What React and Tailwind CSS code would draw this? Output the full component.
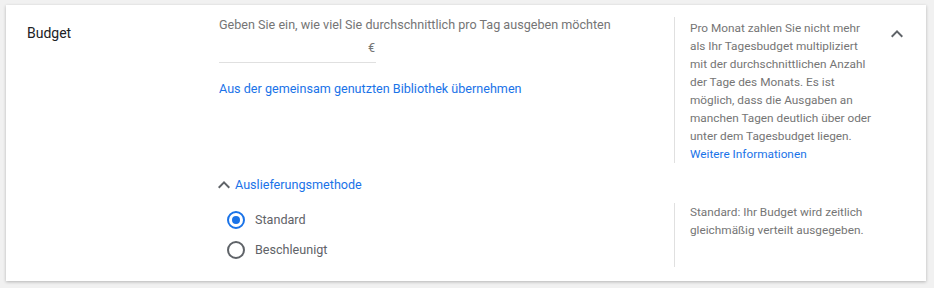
import React from 'react';

const ChevronUp = ({ className }) => (
  <svg viewBox="0 0 24 24" className={className} fill="currentColor">
    <path d="M12 8l-6 6 1.41 1.41L12 10.83l4.59 4.58L18 14z" />
  </svg>
);

const Radio = ({ checked, label }) => (
  <label className="flex items-center h-[20px] gap-[10px] cursor-pointer">
    <span
      className={`w-[18px] h-[18px] rounded-full border-2 flex items-center justify-center ${
        checked ? 'border-[#1a73e8]' : 'border-[#5f6368]'
      }`}
    >
      {checked && <span className="w-[8px] h-[8px] rounded-full bg-[#1a73e8]" />}
    </span>
    <span className="text-[12.6px] leading-[20px] text-[#5f6368]">{label}</span>
  </label>
);

export default function App() {
  return (
    <div className="min-h-screen bg-[#f1f1f1] pt-[5px] pl-[6px] font-['Roboto',sans-serif]">
      <div className="w-[920px] bg-white shadow-[0_1px_3px_rgba(0,0,0,0.25)] flex pl-[21px] pt-[12px] pb-[14px]">
        {/* label */}
        <div className="w-[192px] shrink-0 pt-[6px] text-[14px] leading-[20px] text-[#202124]">Budget</div>

        <div className="flex-1 flex flex-col">
          {/* daily budget */}
          <div className="flex">
            <div className="w-[455px] shrink-0">
              <p className="text-[12.6px] leading-[16px] text-[#757575]">
                Geben Sie ein, wie viel Sie durchschnittlich pro Tag ausgeben möchten
              </p>
              <div className="w-[157px] h-[30px] border-b border-[#e0e0e0] flex items-end justify-end pb-[6px] pr-[1px]">
                <span className="text-[12.6px] leading-[16px] text-[#757575]">€</span>
              </div>
              <a href="#" className="block mt-[18px] text-[12.6px] leading-[16px] text-[#1a73e8]">
                Aus der gemeinsam genutzten Bibliothek übernehmen
              </a>
            </div>
            <div className="w-[201px] shrink-0 border-l border-[#e0e0e0] pl-[15px] pt-[2px] h-[146px]">
              <p className="text-[11.8px] leading-[18px] text-[#757575]">
                Pro Monat zahlen Sie nicht mehr als Ihr Tagesbudget multipliziert mit der durchschnittlichen Anzahl der Tage des Monats. Es ist möglich, dass die Ausgaben an manchen Tagen deutlich über oder unter dem Tagesbudget liegen.
              </p>
              <a href="#" className="block text-[11.8px] leading-[18px] text-[#1a73e8]">Weitere Informationen</a>
            </div>
            <div className="flex-1 flex justify-center pt-[5px]">
              <ChevronUp className="w-[24px] h-[24px] text-[#5f6368] -ml-[8px]" />
            </div>
          </div>

          {/* delivery method */}
          <button className="mt-[12px] -ml-[7px] flex items-center h-[20px] self-start">
            <ChevronUp className="w-[24px] h-[24px] text-[#5f6368]" />
            <span className="-ml-[1px] text-[12.6px] leading-[20px] text-[#1a73e8]">Auslieferungsmethode</span>
          </button>

          <div className="flex mt-[8px]">
            <div className="w-[455px] shrink-0 pl-[8px] pt-[7px] flex flex-col gap-[10px]">
              <Radio checked label="Standard" />
              <Radio label="Beschleunigt" />
            </div>
            <div className="w-[201px] shrink-0 border-l border-[#e0e0e0] pl-[15px] h-[64px]">
              <p className="text-[11.8px] leading-[18px] text-[#757575]">
                Standard: Ihr Budget wird zeitlich gleichmäßig verteilt ausgegeben.
              </p>
            </div>
          </div>
        </div>
      </div>
    </div>
  );
}
